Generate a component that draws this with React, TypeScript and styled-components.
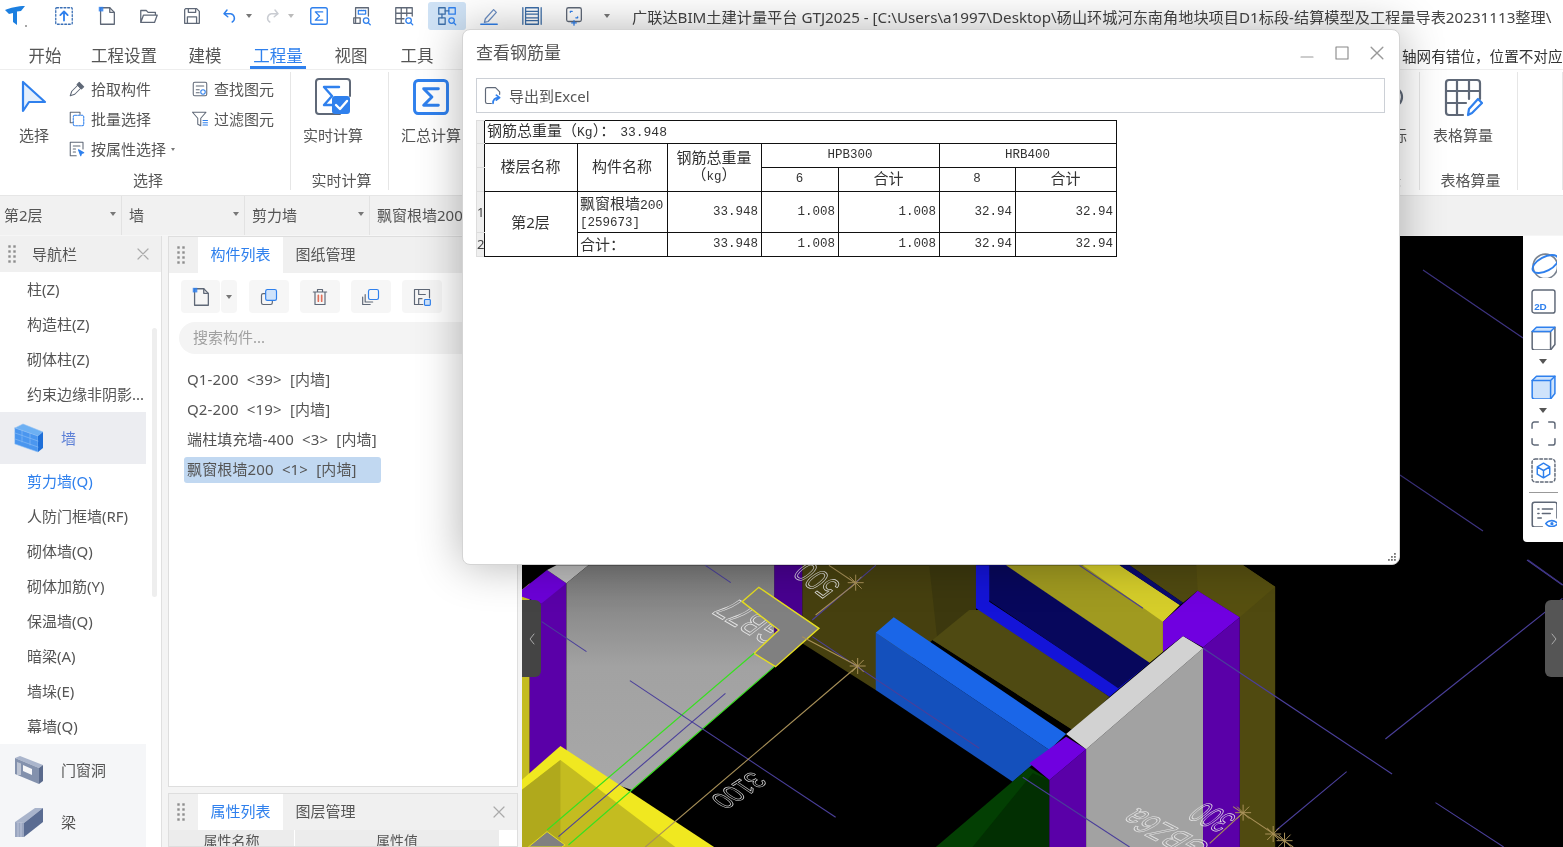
import React from "react";
import styled, { createGlobalStyle } from "styled-components";

const SANS = `"Noto Sans", "Noto Sans CJK SC", sans-serif`;
const MONO = `"Liberation Mono", "Noto Sans CJK SC", monospace`;
const GRAY = "#5f6877";
const BLUE = "#2f80ed";
const PALE = "#cfe3fb";

const Global = createGlobalStyle`
  html, body { margin: 0; padding: 0; background: #fff; }
  body { font-family: ${SANS}; color: #555; }
  * { box-sizing: border-box; }
`;

type GlyphProps = { $w: number; $h?: number; $vb?: string };
const Glyph = styled.svg.attrs<GlyphProps>((p) => ({
  viewBox: p.$vb ?? "0 0 24 24",
  fill: p.fill ?? "none",
  stroke: p.stroke ?? GRAY,
  strokeWidth: p.strokeWidth ?? 1.4,
  strokeLinecap: "round",
  strokeLinejoin: "round",
}))<GlyphProps>`
  width: ${(p) => p.$w}px;
  height: ${(p) => p.$h ?? p.$w}px;
  flex: none;
  display: block;
`;

/* ---------- page frame ---------- */
const Page = styled.div`
  position: relative;
  width: 1563px;
  height: 847px;
  overflow: hidden;
  background: #fff;
  display: flex;
  flex-direction: column;
  filter: blur(0.35px);
`;

const TitleBar = styled.div`
  height: 33px;
  display: flex;
  align-items: center;
  padding: 0 0 2px 4px;
  white-space: nowrap;
  overflow: hidden;
  flex: none;
`;
const LogoSlot = styled.div`
  width: 39px;
  display: flex;
`;
const QuickSlot = styled.div<{ $w?: number; $pad?: number; $on?: boolean }>`
  width: ${(p) => p.$w ?? 42.5}px;
  height: 28px;
  display: flex;
  align-items: center;
  justify-content: ${(p) => (p.$pad != null ? "flex-start" : "center")};
  padding-left: ${(p) => p.$pad ?? 0}px;
  gap: 2px;
  flex: none;
  border-radius: 3px;
  background: ${(p) => (p.$on ? "#cfe2f5" : "transparent")};
`;
const QuickGap = styled.div<{ $w: number }>`
  width: ${(p) => p.$w}px;
  flex: none;
`;
const WindowTitle = styled.div`
  margin-left: 13.5px;
  font-size: 15.2px;
  color: #444;
`;
const CaretDown = styled.span<{ $c?: string; $s?: number }>`
  width: 0;
  height: 0;
  flex: none;
  border-left: ${(p) => p.$s ?? 3}px solid transparent;
  border-right: ${(p) => p.$s ?? 3}px solid transparent;
  border-top: ${(p) => (p.$s ?? 3) + 1}px solid ${(p) => p.$c ?? "#777"};
`;

const TabBar = styled.div`
  height: 37px;
  display: flex;
  align-items: flex-end;
  flex: none;
  padding-left: 21px;
  border-bottom: 1px solid #eee;
`;
const MenuTab = styled.div<{ $w: number; $on?: boolean }>`
  width: ${(p) => p.$w}px;
  height: 36px;
  font-size: 16.5px;
  line-height: 1;
  padding-top: 15px;
  text-align: center;
  flex: none;
  white-space: nowrap;
  color: ${(p) => (p.$on ? BLUE : "#555")};
  position: relative;
  &::after {
    content: "";
    display: ${(p) => (p.$on ? "block" : "none")};
    position: absolute;
    left: 50%;
    bottom: 0;
    width: 56px;
    margin-left: -28px;
    height: 3px;
    background: ${BLUE};
  }
`;
const Notice = styled.div`
  margin-left: auto;
  width: 161px;
  height: 24px;
  line-height: 24px;
  margin-bottom: 1px;
  font-size: 14.6px;
  color: #333;
  white-space: nowrap;
  overflow: hidden;
`;

const Ribbon = styled.div`
  height: 125px;
  flex: none;
  display: flex;
  padding: 2px 0 5px;
`;
const RibbonGroup = styled.div<{ $w?: number; $grow?: boolean }>`
  width: ${(p) => (p.$w ? `${p.$w}px` : "auto")};
  flex: ${(p) => (p.$grow ? 1 : "none")};
  height: 118px;
  display: flex;
  flex-direction: column;
  border-right: 1px solid #e6e6e6;
`;
const GroupBody = styled.div`
  flex: 1;
  display: flex;
  padding-top: 2px;
`;
const GroupLabel = styled.div<{ $pl?: number; $pr?: number }>`
  height: 20px;
  line-height: 20px;
  font-size: 15px;
  text-align: ${(p) => (p.$pr ? "right" : "center")};
  padding-left: ${(p) => p.$pl ?? 0}px;
  padding-right: ${(p) => p.$pr ?? 0}px;
  color: #555;
  white-space: nowrap;
`;
const BigButton = styled.div<{ $w: number; $end?: boolean }>`
  width: ${(p) => p.$w}px;
  margin-left: ${(p) => (p.$end ? "auto" : 0)};
  flex: none;
  display: flex;
  flex-direction: column;
  align-items: center;
  padding-top: 4px;
  font-size: 15px;
  line-height: 20px;
  color: #555;
  white-space: nowrap;
`;
const BigIconBox = styled.div`
  height: 38px;
  display: flex;
  align-items: center;
  justify-content: center;
  margin-bottom: 9px;
`;
const SmallColumn = styled.div<{ $w: number }>`
  width: ${(p) => p.$w}px;
  flex: none;
  display: flex;
  flex-direction: column;
`;
const SmallButton = styled.div`
  height: 30px;
  display: flex;
  align-items: center;
  gap: 5px;
  font-size: 15px;
  line-height: 28px;
  color: #555;
  white-space: nowrap;
`;

const SelectorRow = styled.div`
  height: 41px;
  flex: none;
  display: flex;
  background: #f1f1f1;
  border-top: 1px solid #e6e6e6;
  border-bottom: 1px solid #f6f6f6;
`;
const Selector = styled.div<{ $w: number; $first?: boolean }>`
  width: ${(p) => p.$w}px;
  flex: none;
  display: flex;
  align-items: center;
  justify-content: space-between;
  padding: 0 5px 3px ${(p) => (p.$first ? 4 : 7)}px;
  font-size: 15px;
  color: #555;
  border-right: 1px solid #e2e2e2;
  white-space: nowrap;
`;

const Workspace = styled.div`
  flex: 1;
  min-height: 0;
  display: flex;
  background: #f4f4f4;
`;

/* ---------- navigation ---------- */
const NavPanel = styled.div`
  position: relative;
  width: 162px;
  flex: none;
  background: #fff;
  border-right: 1px solid #e0e0e0;
  overflow: hidden;
`;
const PanelHead = styled.div<{ $h?: number }>`
  height: ${(p) => p.$h ?? 36}px;
  display: flex;
  align-items: center;
  background: #f0f0f0;
  font-size: 15px;
  color: #555;
  flex: none;
`;
const GripBox = styled.div<{ $w: number }>`
  width: ${(p) => p.$w}px;
  padding-left: 8px;
  display: flex;
  flex: none;
`;
const NavTitle = styled.div`
  flex: 1;
  padding-bottom: 2px;
`;
const CloseBox = styled.div`
  width: 36px;
  display: flex;
  justify-content: center;
  flex: none;
`;
const NavItem = styled.div<{ $on?: boolean }>`
  height: 35px;
  line-height: 34px;
  padding-left: 27px;
  font-size: 15px;
  white-space: nowrap;
  color: ${(p) => (p.$on ? BLUE : "#555")};
`;
const Category = styled.div<{ $on?: boolean; $h?: number }>`
  width: 146px;
  height: ${(p) => p.$h ?? 52}px;
  padding-left: 14px;
  display: flex;
  align-items: center;
  gap: 17px;
  font-size: 15px;
  line-height: 20px;
  background: ${(p) => (p.$on ? "#ecedf1" : "#f5f6f8")};
  color: ${(p) => (p.$on ? "#5b7fd6" : "#555")};
`;
const NavScroll = styled.div`
  position: absolute;
  left: 152px;
  top: 92px;
  width: 5px;
  height: 269px;
  border-radius: 3px;
  background: #eeeeee;
`;

/* ---------- middle column ---------- */
const MiddleColumn = styled.div`
  width: 350px;
  margin-left: 6px;
  flex: none;
  display: flex;
  flex-direction: column;
  gap: 6px;
`;
const BoxPanel = styled.div<{ $grow?: boolean }>`
  flex: ${(p) => (p.$grow ? 1 : "none")};
  height: ${(p) => (p.$grow ? "auto" : "54px")};
  background: #fff;
  border: 1px solid #dedede;
  display: flex;
  flex-direction: column;
  overflow: hidden;
`;
const PanelTab = styled.div<{ $on?: boolean }>`
  width: 85px;
  height: 100%;
  display: flex;
  align-items: center;
  justify-content: center;
  padding-bottom: 4px;
  flex: none;
  background: ${(p) => (p.$on ? "#fff" : "transparent")};
  color: ${(p) => (p.$on ? BLUE : "#555")};
`;
const Spring = styled.div`
  flex: 1;
`;
const CompToolbar = styled.div`
  display: flex;
  padding: 7px 0 0 12px;
  height: 40px;
  flex: none;
`;
const ToolButton = styled.div<{ $w?: number; $after?: number }>`
  width: ${(p) => p.$w ?? 40}px;
  height: 33px;
  margin-right: ${(p) => p.$after ?? 11}px;
  border-radius: 4px;
  background: #f6f6f6;
  display: flex;
  align-items: center;
  justify-content: center;
  flex: none;
`;
const SearchBox = styled.div`
  margin: 9px 0 0 10px;
  height: 32px;
  line-height: 31px;
  padding-left: 14px;
  border-radius: 16px;
  background: #f4f4f4;
  color: #a0a0a0;
  font-size: 15px;
  flex: none;
`;
const CompList = styled.div`
  padding: 13px 0 0 15px;
  display: flex;
  flex-direction: column;
  gap: 4px;
`;
const CompItem = styled.div<{ $on?: boolean }>`
  width: 197px;
  height: 26px;
  line-height: 24px;
  padding-left: 3px;
  font-size: 15px;
  letter-spacing: 0.15px;
  white-space: pre;
  border-radius: 3px;
  color: #555;
  background: ${(p) => (p.$on ? "#c1d8f1" : "transparent")};
`;
const PropHead = styled.div`
  height: 17px;
  display: flex;
  font-size: 14px;
  line-height: 22px;
  color: #555;
`;
const PropCell = styled.div<{ $w: number }>`
  width: ${(p) => p.$w}px;
  background: #ececec;
  border-right: 1px solid #fff;
  text-align: center;
  flex: none;
  overflow: hidden;
`;

/* ---------- canvas ---------- */
const CanvasWrap = styled.div`
  position: relative;
  flex: 1;
  margin-left: 4px;
  background: #000;
  overflow: hidden;
`;
const CanvasSvg = styled.svg`
  display: block;
  width: 100%;
  height: 100%;
`;
const Handle = styled.div<{ $side: "left" | "right" }>`
  position: absolute;
  top: 364px;
  ${(p) => p.$side}: 0;
  width: ${(p) => (p.$side === "left" ? 19 : 18)}px;
  height: 77px;
  background: ${(p) => (p.$side === "left" ? "#444" : "#555")};
  border-radius: ${(p) => (p.$side === "left" ? "0 6px 6px 0" : "6px 0 0 6px")};
  display: flex;
  align-items: center;
  justify-content: center;
`;
const ViewBar = styled.div`
  position: absolute;
  top: 0;
  right: 0;
  width: 40px;
  height: 306px;
  background: #fff;
  border-bottom-left-radius: 4px;
  padding-top: 9.5px;
  display: flex;
  flex-direction: column;
  align-items: center;
`;
const ViewSlot = styled.div<{ $h: number }>`
  height: ${(p) => p.$h}px;
  display: flex;
  align-items: center;
  justify-content: center;
  flex: none;
`;
const ViewRule = styled.div`
  width: 29px;
  height: 1px;
  background: #999;
  flex: none;
`;

/* ---------- dialog ---------- */
const Dialog = styled.div`
  position: absolute;
  left: 462px;
  top: 29px;
  width: 938px;
  height: 536px;
  background: #fff;
  border: 1px solid #d4d4d4;
  border-radius: 8px;
  box-shadow: 0 0 45px rgba(0, 0, 0, 0.3);
  padding: 0 14px 0 13px;
`;
const DialogHead = styled.div`
  height: 48px;
  display: flex;
  align-items: center;
  padding-bottom: 3px;
  margin-right: -9px;
  font-size: 17px;
  color: #555;
`;
const DialogTitle = styled.div`
  flex: 1;
  padding-bottom: 2px;
`;
const WindowButton = styled.div`
  width: 35px;
  display: flex;
  justify-content: center;
  flex: none;
`;
const ExportBar = styled.div`
  height: 35px;
  border: 1px solid #ccd0d6;
  display: flex;
  align-items: center;
  gap: 6px;
  padding-left: 6px;
  font-size: 15px;
  color: #555;
`;
const Sheet = styled.table`
  margin-top: 7px;
  border-collapse: collapse;
  table-layout: fixed;
  width: 640px;
`;
const SheetCol = styled.col<{ $w: number }>`
  width: ${(p) => p.$w}px;
`;
const Row = styled.tr<{ $h: number }>`
  height: ${(p) => p.$h}px;
`;
const Gutter = styled.td`
  padding: 0;
  background: #efefef;
  border: 1px solid #ddd;
  border-right: none;
  font: 13px/1 ${SANS};
  color: #444;
  text-align: center;
  overflow: hidden;
`;
const Cell = styled.td<{ $align?: string; $mono?: boolean; $tight?: boolean }>`
  border: 1px solid #111;
  padding: 0 3px ${(p) => (p.$mono || p.$tight ? 0 : 3)}px 2px;
  text-align: ${(p) => p.$align ?? "center"};
  color: #333;
  font-family: ${(p) => (p.$mono ? MONO : SANS)};
  font-size: ${(p) => (p.$mono ? 12.5 : 15)}px;
  line-height: 17px;
  white-space: nowrap;
  overflow: hidden;
`;
const CellLine = styled.div`
  height: 17px;
  line-height: 17px;
`;
const MonoRun = styled.span<{ $size?: number; $ml?: number }>`
  font-family: ${MONO};
  font-size: ${(p) => p.$size ?? 12.5}px;
  margin-left: ${(p) => p.$ml ?? 0}px;
  line-height: 1;
`;
const Grip = styled.div`
  position: absolute;
  right: 3px;
  bottom: 3px;
`;

/* ---------- icons ---------- */
const GripDots = () => (
  <Glyph $w={8} $h={18} $vb="0 0 8 18" stroke="none">
    {[1.5, 6.5, 11.5, 16.5].flatMap((y) =>
      [1.5, 6.5].map((x) => <rect key={`${x}-${y}`} x={x - 1.2} y={y - 1.2} width="2.4" height="2.4" fill="#8d8d8d" />)
    )}
  </Glyph>
);
const Cross = ({ s = 12, c = "#aaa" }: { s?: number; c?: string }) => (
  <Glyph $w={s} $vb="0 0 12 12" stroke={c} strokeWidth={1.2}>
    <path d="M1 1l10 10M11 1L1 11" />
  </Glyph>
);
const Logo = () => (
  <Glyph $w={24} stroke="none">
    <path d="M1 6c5-2 13-4 20-4l-4 5-4 .5V21l-4-3V9l-4 1z" fill="#1c7fe0" />
    <circle cx="22" cy="22" r="1" fill="#888" />
  </Glyph>
);
const UploadBox = () => (
  <Glyph $w={22} stroke={BLUE}>
    <rect x="3" y="3" width="18" height="18" rx="1" strokeDasharray="2 2" stroke="#3a6fb5" />
    <path d="M12 17V8M8 11l4-4 4 4" strokeWidth="2" />
  </Glyph>
);
const NewDoc = ({ s = 22 }: { s?: number }) => (
  <Glyph $w={s}>
    <path d="M5 3h10l5 5v13H5z" />
    <path d="M15 3v5h5" />
    <rect x="3" y="2" width="5" height="5" fill={BLUE} stroke="none" opacity=".85" />
  </Glyph>
);
const Folder = () => (
  <Glyph $w={22}>
    <path d="M3 19V6h6l2 2h8v3M3 19l3-8h15l-3 8z" />
  </Glyph>
);
const Save = () => (
  <Glyph $w={22}>
    <path d="M5 4h12l3 3v13H4V5z" />
    <path d="M8 4v4h8V4M7 20v-7h10v7" />
  </Glyph>
);
const Arc = ({ c, flip }: { c: string; flip?: boolean }) => (
  <Glyph $w={18} stroke={c} strokeWidth={2}>
    <g transform={flip ? "translate(24 0) scale(-1 1)" : undefined}>
      <path d="M8 4L4 9l5 4M4 9h9a6 6 0 0 1 2 11" />
    </g>
  </Glyph>
);
const SigmaBox = ({ s = 22, sw = 1.5 }: { s?: number; sw?: number }) => (
  <Glyph $w={s} stroke={BLUE} strokeWidth={sw}>
    <rect x="3" y="3" width="18" height="18" rx="2" />
    <path d="M16 7.5H8l4.5 4.5L8 16.5h8" />
  </Glyph>
);
const DocFind = () => (
  <Glyph $w={22}>
    <path d="M5 19V3h14v9" />
    <rect x="8" y="6" width="8" height="4" stroke={BLUE} strokeDasharray="1.5 1" />
    <path d="M3 14v6h7v-6z" />
    <circle cx="16.5" cy="17" r="3" stroke={BLUE} />
    <path d="M19 19.5l2 2" stroke={BLUE} />
  </Glyph>
);
const GridFind = ({ top }: { top?: boolean }) => (
  <Glyph $w={22}>
    {top ? (
      <>
        <rect x="3" y="3" width="7" height="7" stroke="#3c6ea8" />
        <rect x="14" y="3" width="7" height="7" stroke={BLUE} />
        <path d="M3 14h7v7H3z" stroke="#3c6ea8" />
        <path d="M10 6.5h4M6.5 10v4" stroke="#3c6ea8" />
      </>
    ) : (
      <path d="M3 3h18v9M3 3v17h9M9 3v17M15 3v9M3 9h18M3 15h9" />
    )}
    <circle cx="17" cy="17" r="3" stroke={BLUE} />
    <path d="M19.5 19.5l2 2" stroke={BLUE} />
  </Glyph>
);
const PenLine = () => (
  <Glyph $w={22} stroke={BLUE}>
    <path d="M8 15l9-10 3 3-9 10-4 1z" stroke="#6c8fc4" />
    <path d="M3 21h18" />
  </Glyph>
);
const Film = () => (
  <Glyph $w={22} stroke="#3c6ea8">
    <path d="M5 3v18M19 3v18M5 3h14M5 21h14M5 7h14M5 17h14M2 3v18M22 3v18M5 10h14M5 14h14" />
  </Glyph>
);
const FrameAdd = () => (
  <Glyph $w={22}>
    <rect x="4" y="3" width="16" height="15" rx="2" />
    <path d="M8 8V7h2M16 13v1h-2" stroke={BLUE} />
    <path d="M12 17v5M9.5 19.5h5" stroke={BLUE} />
  </Glyph>
);
const Arrow = () => (
  <Glyph $w={32} $h={34} $vb="0 0 32 34" stroke={BLUE} strokeWidth={2.2} fill="#e4effc">
    <path d="M5 2v29l6-9 16 0z" />
  </Glyph>
);
const Picker = () => (
  <Glyph $w={18}>
    <path d="M3 21l2-6 8-8 4 4-8 8z" />
    <path d="M12 6l6 6M15 3l6 6-3 3-6-6z" fill={GRAY} />
  </Glyph>
);
const BatchSelect = () => (
  <Glyph $w={18}>
    <path d="M7 17H3V3h13v3" />
    <rect x="7" y="7" width="14" height="14" rx="2" stroke={BLUE} strokeDasharray="2.5 1.5" />
  </Glyph>
);
const ByProp = () => (
  <Glyph $w={18}>
    <path d="M11 21H3V3h17v9" />
    <path d="M7 8h9M7 12h3M7 16h3" />
    <path d="M14 13l7 4-3 1-1 3z" fill={BLUE} stroke={BLUE} />
  </Glyph>
);
const FindPart = () => (
  <Glyph $w={18}>
    <rect x="3" y="3" width="18" height="18" rx="2" />
    <path d="M7 8h10M7 13h4M7 17h4" />
    <circle cx="16" cy="16" r="3" stroke={BLUE} fill="#fff" />
  </Glyph>
);
const FilterPart = () => (
  <Glyph $w={18}>
    <path d="M2 3h18l-7 8v10l-4-2v-8z" />
    <path d="M16 14h6M16 17h6M16 20h6" stroke={BLUE} />
  </Glyph>
);
const LiveCalc = () => (
  <Glyph $w={40} $vb="0 0 40 40" strokeWidth={2}>
    <path d="M27 37H6a3 3 0 0 1-3-3V5a3 3 0 0 1 3-3h28a3 3 0 0 1 3 3v14" />
    <path d="M26 10H11l8 9-8 9h8" stroke={BLUE} strokeWidth={2.4} />
    <rect x="19" y="19" width="18" height="18" rx="3" fill={BLUE} stroke="none" />
    <path d="M23 28l4 4 7-8" stroke="#fff" strokeWidth={2.4} />
  </Glyph>
);
const TableEdit = () => (
  <Glyph $w={40} $vb="0 0 40 40" strokeWidth={2.2}>
    <path d="M20 38H6a3 3 0 0 1-3-3V6a3 3 0 0 1 3-3h28a3 3 0 0 1 3 3v16" />
    <path d="M3 14h34M3 26h20M14 3v35M26 3v19" />
    <path d="M25 38l1-6 9-10 4 4-10 10z" stroke={BLUE} />
  </Glyph>
);
const Copy = ({ fill }: { fill?: boolean }) => (
  <Glyph $w={20}>
    <rect x="3" y="8" width="13" height="13" rx="2" />
    <rect x="8" y="3" width="13" height="13" rx="2" stroke={BLUE} fill={fill ? PALE : "#fff"} />
  </Glyph>
);
const Trash = () => (
  <Glyph $w={20}>
    <path d="M4 6h16M9 6V3h6v3M6 6v15h12V6" />
    <path d="M10 10v7M14 10v7" stroke="#e0705a" strokeWidth="2" />
  </Glyph>
);
const CopyStack = () => (
  <Glyph $w={20}>
    <path d="M2 12v9h9M5 9v9h9" />
    <rect x="9" y="3" width="12" height="12" rx="2" stroke={BLUE} />
  </Glyph>
);
const SavePart = () => (
  <Glyph $w={20}>
    <path d="M13 21H3V3h18v10" />
    <path d="M8 3v6h8M8 21v-7h4" />
    <rect x="15" y="15" width="7" height="7" rx="1" fill={PALE} stroke={BLUE} />
  </Glyph>
);
const ExportDoc = () => (
  <Glyph $w={20}>
    <path d="M10 21H5a2 2 0 0 1-2-2V4a2 2 0 0 1 2-2h10l5 5v3" />
    <path d="M12 21c0-5 3-7 7-7M16 11l4 3-4 3" stroke={BLUE} strokeWidth={2} />
  </Glyph>
);
const Wall = () => (
  <Glyph $w={30} $vb="0 0 30 30" stroke="#8fc0f5" strokeWidth={0.6}>
    <path d="M1 5l8-4 20 8-5 4z" fill="#6db0f3" />
    <path d="M1 5l23 8v16L1 21z" fill="#4a96ef" />
    <path d="M24 13l5-4v16l-5 4z" fill="#1e6fd8" stroke="none" />
    <path d="M1 10l23 8M1 16l23 8M8 7v6M16 10v6M8 14v5M16 17v5" />
  </Glyph>
);
const Door = () => (
  <Glyph $w={30} $vb="0 0 30 30" stroke="none">
    <path d="M1 3l5-2 23 9-4 3z" fill="#aab5cc" />
    <path d="M1 3l24 10v16L1 19z" fill="#8391ad" />
    <path d="M25 13l4-3v16l-4 3z" fill="#5a6a8c" />
    <path d="M9 10l9 4v6l-9-4z" fill="#f5f6f8" />
    <path d="M3 7l4 1.5V20H3z" fill="#f5f6f8" opacity=".5" />
  </Glyph>
);
const Beam = () => (
  <Glyph $w={30} $vb="0 0 30 30" stroke="none">
    <path d="M1 15L21 1h8L10 16z" fill="#a9b4cb" />
    <path d="M10 16L29 1v14L10 30z" fill="#5a6c92" />
    <path d="M1 15l9 1v14H1z" fill="#9aa6c0" />
    <path d="M4 16v14M7 16v14" stroke="#c5cde0" strokeWidth="0.8" />
  </Glyph>
);
const Planet = () => (
  <Glyph $w={28}>
    <circle cx="14" cy="14" r="10.5" stroke="#7a8390" />
    <ellipse cx="14" cy="12" rx="12" ry="6" transform="rotate(-28 14 12)" stroke={BLUE} strokeWidth={1.6} />
  </Glyph>
);
const TwoD = () => (
  <Glyph $w={25}>
    <rect x="1" y="1" width="22" height="22" rx="2" />
    <text x="3" y="20" fontFamily="'Liberation Sans', sans-serif" fontWeight="700" fontSize="9.5" fill={BLUE} stroke="none">
      2D
    </text>
  </Glyph>
);
const Cube = () => (
  <Glyph $w={26}>
    <path d="M2 7h17v17H4a2 2 0 0 1-2-2z" />
    <path d="M19 24l4-5V3" />
    <path d="M2 7l4-4h17l-4 4z" fill={PALE} stroke={BLUE} />
  </Glyph>
);
const SolidCube = () => (
  <Glyph $w={26} stroke={BLUE}>
    <path d="M2 7l4-4h17v16l-4 5H4a2 2 0 0 1-2-2z" fill={PALE} />
    <path d="M2 7h17v17M19 7l4-4" />
  </Glyph>
);
const Corners = () => (
  <Glyph $w={25}>
    <path d="M1 7V3a2 2 0 0 1 2-2h4M17 1h4a2 2 0 0 1 2 2v4M23 17v4a2 2 0 0 1-2 2h-4M7 23H3a2 2 0 0 1-2-2v-4" />
  </Glyph>
);
const DashCube = () => (
  <Glyph $w={25}>
    <rect x="1" y="1" width="22" height="22" rx="3" strokeDasharray="2.5 2" />
    <path d="M12 5l6 3.5v7L12 19l-6-3.5v-7zM6 8.5l6 3.5 6-3.5M12 12v7" stroke={BLUE} />
  </Glyph>
);
const ListEye = () => (
  <Glyph $w={27}>
    <path d="M11 24H4a2 2 0 0 1-2-2V4a2 2 0 0 1 2-2h18a2 2 0 0 1 2 2v12" />
    <path d="M7 8h1M11 8h9M7 12h1M11 12h7M7 16h3" />
    <path d="M14 21c2-3 7-4 11 0-4 4-9 3-11 0z" stroke={BLUE} />
    <circle cx="19.5" cy="21" r="1.4" fill={BLUE} stroke="none" />
  </Glyph>
);
const Chevron = ({ right }: { right?: boolean }) => (
  <Glyph $w={8} $h={14} $vb="0 0 8 14" stroke="#aaa" strokeWidth={1}>
    <path d={right ? "M2 2l4 5-4 5" : "M6 2L2 7l4 5"} />
  </Glyph>
);
const Ring = () => (
  <Glyph $w={24} strokeWidth={2.2}>
    <circle cx="12" cy="12" r="10" />
  </Glyph>
);
const ResizeDots = () => (
  <Glyph $w={9} $vb="0 0 9 9" stroke="none">
    {[[7, 1], [4, 4], [7, 4], [1, 7], [4, 7], [7, 7]].map(([x, y]) => (
      <rect key={`${x}${y}`} x={x} y={y} width="1.8" height="1.8" fill="#777" />
    ))}
  </Glyph>
);

/* ---------- the 3D view, polygons in a 1048x287 stretched frame ---------- */
type Poly = [string, string];
const FACES: Poly[] = [
  ["430,16 690,16 690,150 880,420 835,510 625,240 540,390 430,250", "#46400f"],
  ["620,16 690,16 690,150 632,235", "#3c380e"],
  ["700,150 890,410 880,430 835,510 625,240 680,150", "#4f4a12"],
  ["920,16 1090,16 1138,80 1138,861 1085,861 1085,172 1022,92 1000,128", "#504a10"],
  ["1020,16 1090,16 1138,80 1085,172 1022,92", "#575010"],
  ["690,16 735,16 950,308 905,385 710,120 710,125 905,385 890,410 690,145", "#1414d8"],
  ["710,16 735,16 950,308 903,385 710,122", "#07075c"],
  ["735,16 905,16 995,135 970,185 970,275 950,308", "#a09a20"],
  ["850,16 905,16 995,135 970,185", "#d6ce2a"],
  ["905,16 920,16 1000,128 995,135", "#0a0a70"],
  ["540,218 800,570 745,665 540,390", "#1450bc"],
  ["567,172 825,522 800,570 540,218", "#1a66e8"],
  ["770,622 800,660 800,861 630,861", "#033f03"],
  ["775,640 800,660 800,861 685,861", "#022f02"],
  ["800,660 855,568 855,861 800,861", "#5a00a8"],
  ["770,610 825,530 855,568 800,660", "#7000e0"],
  ["855,568 1030,265 1030,861 855,861", "#a2a2a2"],
  ["1000,228 1030,265 855,568 825,522", "#d2d2d2"],
  ["1030,262 1085,172 1085,861 1030,861", "#5a00a8"],
  ["970,185 1022,92 1085,172 1030,262 1000,228 970,275", "#7000e0"],
  ["388,16 430,16 430,250 388,320", "#480090"],
  ["10,90 22,70 22,700 10,700", "#c4bc20"],
  ["22,130 77,70 77,620 22,650", "#5a00a8"],
  ["10,90 48,30 77,70 40,130 10,110", "#6c00d8"],
  ["48,30 62,16 110,16 77,70", "#bcbcbc"],
];
const LINES_BLUE: number[][] = [
  [285, 16, 323, 68], [40, 185, 107, 275], [172, 362, 480, 772], [315, 400, 65, 830], [445, 230, 695, 565],
  [1030, 265, 1313, 642], [760, 652, 920, 861], [1515, 0, 1568, 75], [1568, 115, 1303, 537], [1245, 635, 1140, 810],
  [1378, 728, 1480, 861], [540, 16, 445, 180], [845, 16, 940, 145],
];
const LINES_TAN: number[][] = [
  [510, 70, 450, 165], [513, 318, 195, 861], [430, 230, 513, 318], [470, 16, 510, 70], [1075, 740, 1165, 861], [1090, 758, 1040, 850],
];
const STARS: number[][] = [[510, 68], [513, 318], [1090, 758], [1135, 822], [1152, 842]];
const STRETCH = "translate(515 560) scale(.668 .3333)";

const Scene = () => (
  <CanvasSvg viewBox="522 236 1041 611" preserveAspectRatio="none">
    <defs>
      <linearGradient id="slab" x1="0" y1="0" x2="0" y2="1">
        <stop offset="0" stopColor="#787878" />
        <stop offset=".45" stopColor="#a2a2a2" />
        <stop offset="1" stopColor="#a8a8a8" />
      </linearGradient>
    </defs>
    <path d="M1423 270L1523 338M1400 475L1483 531" stroke="#3d3380" strokeWidth="1.2" />
    <g transform={STRETCH}>
      {FACES.map(([pts, c]) => (
        <polygon key={pts} points={pts} fill={c} />
      ))}
      <polygon points="77,70 110,16 388,16 388,320 175,690 77,620" fill="url(#slab)" />
      <polygon points="10,660 68,558 298,861 10,861" fill="#f0e820" />
      <polygon points="10,690 68,600 240,861 10,861" fill="#c4bc20" />
      <polygon points="10,690 68,600 68,861 10,861" fill="#b0a91c" />
    </g>
    <g fontFamily="'Liberation Sans', sans-serif" fontSize="24" fill="none" stroke="#e6e6e6" strokeWidth="0.55">
      <text transform="matrix(-0.95 -0.55 1.31 -1.01 791 630)">GB77</text>
    </g>
    <g transform={STRETCH}>
      <polygon points="365,82 455,205 390,320 358,280 395,210 340,125" fill="#808080" stroke="#e6de20" strokeWidth="1.4" vectorEffect="non-scaling-stroke" />
      <polygon points="48,815 75,855 70,861 20,861" fill="#808080" stroke="#e6de20" vectorEffect="non-scaling-stroke" />
      <path d="M358 280L48 810M388 320L80 855" stroke="#38e020" strokeWidth="1.2" vectorEffect="non-scaling-stroke" />
      {LINES_BLUE.map((l) => (
        <line key={l.join()} x1={l[0]} y1={l[1]} x2={l[2]} y2={l[3]} stroke="#4a3f9a" strokeWidth="1.1" vectorEffect="non-scaling-stroke" />
      ))}
      {LINES_TAN.map((l) => (
        <line key={l.join()} x1={l[0]} y1={l[1]} x2={l[2]} y2={l[3]} stroke="#a89058" strokeWidth="1.1" vectorEffect="non-scaling-stroke" />
      ))}
    </g>
    {STARS.map(([x, y]) => {
      const px = 515 + x * 0.668;
      const py = 560 + y / 3;
      return (
        <path
          key={`${x}-${y}`}
          d={`M${px - 8} ${py}H${px + 8}M${px} ${py - 8}V${py + 8}M${px - 6} ${py - 6}L${px + 6} ${py + 6}M${px + 6} ${py - 6}L${px - 6} ${py + 6}`}
          stroke="#a89058"
          strokeWidth="1"
        />
      );
    })}
    <path d="M1528 560L1563 585" stroke="#3d3380" strokeWidth="1.2" />
    <g fontFamily="'Liberation Sans', sans-serif" fontSize="24" fill="none" stroke="#e6e6e6" strokeWidth="0.55">
      <text transform="matrix(-0.82 -0.62 1.07 -0.88 842 585)">500</text>
      <text transform="matrix(-0.8 0.52 -1 -0.68 752 771)">3100</text>
      <text transform="matrix(-0.98 -0.5 1.3 -0.8 1213 846)">GBZ6a</text>
      <text transform="matrix(-0.83 -0.38 1.15 -0.96 1238 817)">300</text>
    </g>
  </CanvasSvg>
);

const NAV_TOP = ["柱(Z)", "构造柱(Z)", "砌体柱(Z)", "约束边缘非阴影..."];
const NAV_WALL = ["剪力墙(Q)", "人防门框墙(RF)", "砌体墙(Q)", "砌体加筋(Y)", "保温墙(Q)", "暗梁(A)", "墙垛(E)", "幕墙(Q)"];

export default function App() {
  return (
    <Page>
      <Global />
      <TitleBar>
        <LogoSlot><Logo /></LogoSlot>
        <QuickSlot><UploadBox /></QuickSlot>
        <QuickSlot><NewDoc /></QuickSlot>
        <QuickSlot><Folder /></QuickSlot>
        <QuickSlot><Save /></QuickSlot>
        <QuickSlot $w={47} $pad={8}><Arc c={BLUE} /><QuickGap $w={3} /><CaretDown /></QuickSlot>
        <QuickSlot $w={38} $pad={3}><Arc c="#c9ccd2" flip /><QuickGap $w={3} /><CaretDown $c="#bbb" /></QuickSlot>
        <QuickSlot><SigmaBox /></QuickSlot>
        <QuickSlot><DocFind /></QuickSlot>
        <QuickSlot><GridFind /></QuickSlot>
        <QuickGap $w={2} />
        <QuickSlot $on $w={38}><GridFind top /></QuickSlot>
        <QuickGap $w={1} />
        <QuickSlot $w={44}><PenLine /></QuickSlot>
        <QuickSlot><Film /></QuickSlot>
        <QuickSlot><FrameAdd /></QuickSlot>
        <QuickSlot $w={23}><CaretDown $s={3} /></QuickSlot>
        <WindowTitle>广联达BIM土建计量平台 GTJ2025 - [C:\Users\a1997\Desktop\砀山环城河东南角地块项目D1标段-结算模型及工程量导表20231113整理\</WindowTitle>
      </TitleBar>

      <TabBar>
        <MenuTab $w={48}>开始</MenuTab>
        <MenuTab $w={110}>工程设置</MenuTab>
        <MenuTab $w={52}>建模</MenuTab>
        <MenuTab $w={94} $on>工程量</MenuTab>
        <MenuTab $w={52}>视图</MenuTab>
        <MenuTab $w={80}>工具</MenuTab>
        <Notice>轴网有错位，位置不对应</Notice>
      </TabBar>

      <Ribbon>
        <RibbonGroup $w={291}>
          <GroupBody>
            <BigButton $w={68}>
              <BigIconBox><Arrow /></BigIconBox>
              选择
            </BigButton>
            <SmallColumn $w={123}>
              <SmallButton><Picker />拾取构件</SmallButton>
              <SmallButton><BatchSelect />批量选择</SmallButton>
              <SmallButton><ByProp />按属性选择<CaretDown $s={2.5} /></SmallButton>
            </SmallColumn>
            <SmallColumn $w={95}>
              <SmallButton><FindPart />查找图元</SmallButton>
              <SmallButton><FilterPart />过滤图元</SmallButton>
            </SmallColumn>
          </GroupBody>
          <GroupLabel $pl={6}>选择</GroupLabel>
        </RibbonGroup>
        <RibbonGroup $w={98}>
          <GroupBody>
            <BigButton $w={84}>
              <BigIconBox><LiveCalc /></BigIconBox>
              实时计算
            </BigButton>
          </GroupBody>
          <GroupLabel $pl={4}>实时计算</GroupLabel>
        </RibbonGroup>
        <RibbonGroup $grow>
          <GroupBody>
            <BigButton $w={84}>
              <BigIconBox><SigmaBox s={44} sw={1.6} /></BigIconBox>
              汇总计算
            </BigButton>
            <BigButton $w={54} $end>
              <BigIconBox><Ring /></BigIconBox>
              坐标
            </BigButton>
          </GroupBody>
          <GroupLabel $pr={18}>坐标</GroupLabel>
        </RibbonGroup>
        <RibbonGroup $w={98}>
          <GroupBody>
            <BigButton $w={86}>
              <BigIconBox><TableEdit /></BigIconBox>
              表格算量
            </BigButton>
          </GroupBody>
          <GroupLabel $pl={4}>表格算量</GroupLabel>
        </RibbonGroup>
        <RibbonGroup $w={45} />
      </Ribbon>

      <SelectorRow>
        <Selector $w={122} $first>第2层<CaretDown $s={3} /></Selector>
        <Selector $w={123}>墙<CaretDown $s={3} /></Selector>
        <Selector $w={125}>剪力墙<CaretDown $s={3} /></Selector>
        <Selector $w={150}>飘窗根墙200</Selector>
      </SelectorRow>

      <Workspace>
        <NavPanel>
          <PanelHead>
            <GripBox $w={32}><GripDots /></GripBox>
            <NavTitle>导航栏</NavTitle>
            <CloseBox><Cross /></CloseBox>
          </PanelHead>
          {NAV_TOP.map((t) => <NavItem key={t}>{t}</NavItem>)}
          <Category $on><Wall /><span>墙</span></Category>
          {NAV_WALL.map((t, i) => <NavItem key={t} $on={i === 0}>{t}</NavItem>)}
          <Category><Door /><span>门窗洞</span></Category>
          <Category><Beam /><span>梁</span></Category>
          <NavScroll />
        </NavPanel>

        <MiddleColumn>
          <BoxPanel $grow>
            <PanelHead>
              <GripBox $w={29}><GripDots /></GripBox>
              <PanelTab $on>构件列表</PanelTab>
              <PanelTab>图纸管理</PanelTab>
            </PanelHead>
            <CompToolbar>
              <ToolButton $w={39} $after={1}><NewDoc s={22} /></ToolButton>
              <ToolButton $w={16} $after={12}><CaretDown $s={3} /></ToolButton>
              <ToolButton><Copy fill /></ToolButton>
              <ToolButton><Trash /></ToolButton>
              <ToolButton><CopyStack /></ToolButton>
              <ToolButton><SavePart /></ToolButton>
            </CompToolbar>
            <SearchBox>搜索构件...</SearchBox>
            <CompList>
              <CompItem>{"Q1-200  <39>  [内墙]"}</CompItem>
              <CompItem>{"Q2-200  <19>  [内墙]"}</CompItem>
              <CompItem>{"端柱填充墙-400  <3>  [内墙]"}</CompItem>
              <CompItem $on>{"飘窗根墙200  <1>  [内墙]"}</CompItem>
            </CompList>
          </BoxPanel>
          <BoxPanel>
            <PanelHead>
              <GripBox $w={29}><GripDots /></GripBox>
              <PanelTab $on>属性列表</PanelTab>
              <PanelTab>图层管理</PanelTab>
              <Spring />
              <CloseBox><Cross /></CloseBox>
            </PanelHead>
            <PropHead>
              <PropCell $w={126}>属性名称</PropCell>
              <PropCell $w={205}>属性值</PropCell>
            </PropHead>
          </BoxPanel>
        </MiddleColumn>

        <CanvasWrap>
          <Scene />
          <Handle $side="left"><Chevron /></Handle>
          <Handle $side="right"><Chevron right /></Handle>
          <ViewBar>
            <ViewSlot $h={37}><Planet /></ViewSlot>
            <ViewSlot $h={37}><TwoD /></ViewSlot>
            <ViewSlot $h={35}><Cube /></ViewSlot>
            <ViewSlot $h={14}><CaretDown $c="#555" $s={4} /></ViewSlot>
            <ViewSlot $h={35}><SolidCube /></ViewSlot>
            <ViewSlot $h={14}><CaretDown $c="#555" $s={4} /></ViewSlot>
            <ViewSlot $h={31}><Corners /></ViewSlot>
            <ViewSlot $h={43}><DashCube /></ViewSlot>
            <ViewRule />
            <ViewSlot $h={42}><ListEye /></ViewSlot>
          </ViewBar>
        </CanvasWrap>
      </Workspace>

      <Dialog>
        <DialogHead>
          <DialogTitle>查看钢筋量</DialogTitle>
          <WindowButton>
            <Glyph $w={14} $vb="0 0 14 14" stroke="#999" strokeWidth={1.1}><path d="M1 11h12" /></Glyph>
          </WindowButton>
          <WindowButton>
            <Glyph $w={14} $vb="0 0 14 14" stroke="#888" strokeWidth={1.1}><rect x="1" y="1" width="12" height="12" /></Glyph>
          </WindowButton>
          <WindowButton><Cross s={14} c="#999" /></WindowButton>
        </DialogHead>
        <ExportBar><ExportDoc />导出到Excel</ExportBar>
        <Sheet>
          <colgroup>
            <SheetCol $w={8} />
            <SheetCol $w={93} />
            <SheetCol $w={90} />
            <SheetCol $w={94} />
            <SheetCol $w={77} />
            <SheetCol $w={101} />
            <SheetCol $w={76} />
            <SheetCol $w={101} />
          </colgroup>
          <tbody>
            <Row $h={23}>
              <Gutter />
              <Cell colSpan={7} $align="left">钢筋总重量（<MonoRun $size={13}>Kg</MonoRun>）：<MonoRun $size={13} $ml={5}>33.948</MonoRun></Cell>
            </Row>
            <Row $h={24}>
              <Gutter />
              <Cell rowSpan={2}>楼层名称</Cell>
              <Cell rowSpan={2}>构件名称</Cell>
              <Cell rowSpan={2}>
                <CellLine>钢筋总重量</CellLine>
                <CellLine>（<MonoRun>kg</MonoRun>）</CellLine>
              </Cell>
              <Cell colSpan={2} $mono>HPB300</Cell>
              <Cell colSpan={2} $mono>HRB400</Cell>
            </Row>
            <Row $h={24}>
              <Gutter />
              <Cell $mono>6</Cell>
              <Cell>合计</Cell>
              <Cell $mono>8</Cell>
              <Cell>合计</Cell>
            </Row>
            <Row $h={41}>
              <Gutter>1</Gutter>
              <Cell rowSpan={2}>第2层</Cell>
              <Cell $align="left" $tight>
                <CellLine>飘窗根墙<MonoRun $size={13}>200</MonoRun></CellLine>
                <CellLine><MonoRun>[259673]</MonoRun></CellLine>
              </Cell>
              <Cell $mono $align="right">33.948</Cell>
              <Cell $mono $align="right">1.008</Cell>
              <Cell $mono $align="right">1.008</Cell>
              <Cell $mono $align="right">32.94</Cell>
              <Cell $mono $align="right">32.94</Cell>
            </Row>
            <Row $h={24}>
              <Gutter>2</Gutter>
              <Cell $align="left" $tight>合计：</Cell>
              <Cell $mono $align="right">33.948</Cell>
              <Cell $mono $align="right">1.008</Cell>
              <Cell $mono $align="right">1.008</Cell>
              <Cell $mono $align="right">32.94</Cell>
              <Cell $mono $align="right">32.94</Cell>
            </Row>
          </tbody>
        </Sheet>
        <Grip><ResizeDots /></Grip>
      </Dialog>
    </Page>
  );
}
